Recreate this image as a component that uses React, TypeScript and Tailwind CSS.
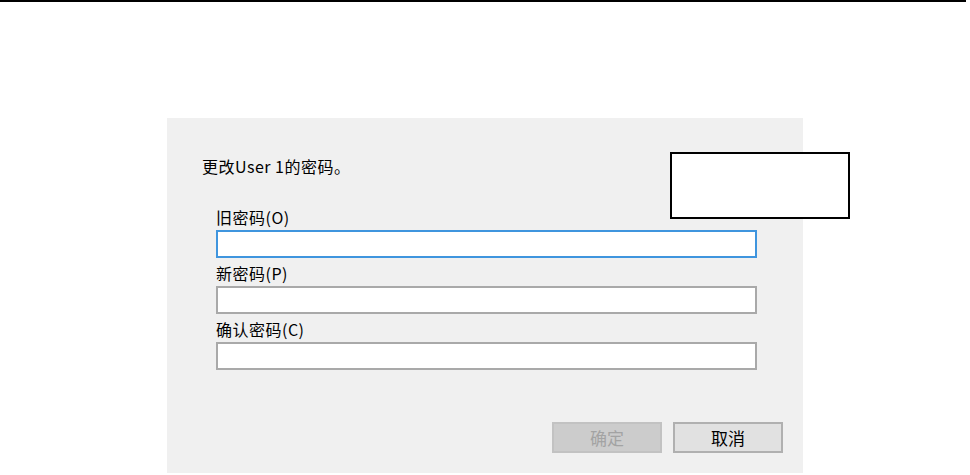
import React from 'react';

const fields = [
  { id: 'old', label: '旧密码(O)', focused: true },
  { id: 'new', label: '新密码(P)', focused: false },
  { id: 'confirm', label: '确认密码(C)', focused: false },
];

const App: React.FC = () => {
  return (
    <div className="relative w-[970px] h-[475px] bg-white overflow-hidden font-['Noto_Sans_CJK_SC',sans-serif] text-black">
      <div className="h-[2px] w-[966px] bg-black" />

      <div className="ml-[167px] mt-[116px] w-[636px] h-[355px] bg-[#f0f0f0] flex flex-col">
        <p className="ml-[35px] mt-[36px] text-[16px] leading-[24px] tracking-[0.5px]">更改User 1的密码。</p>

        <div className="ml-[49px] mr-[46px] mt-[26px] flex flex-col gap-[2px]">
          {fields.map((f) => (
            <div key={f.id} className="flex flex-col">
              <label className="h-[26px] flex items-center text-[16px] tracking-[0.5px]">{f.label}</label>
              <input
                type="password"
                className={`h-[28px] w-full bg-white border-2 outline-none ${
                  f.focused ? 'border-[#3f95de]' : 'border-[#a9a9a9]'
                }`}
              />
            </div>
          ))}
        </div>

        <div className="mt-auto mb-[20px] mr-[20px] flex justify-end gap-[11px]">
          <button
            disabled
            className="w-[110px] h-[31px] bg-[#cccccc] border-2 border-[#c2c2c2] text-[#a3a3a3] text-[17px] leading-none"
          >
            确定
          </button>
          <button className="w-[110px] h-[31px] bg-[#e1e1e1] border-2 border-[#b0b0b0] text-black text-[17px] leading-none">
            取消
          </button>
        </div>
      </div>

      {/* annotation box laid over the dialog */}
      <div className="absolute left-[670px] top-[152px] w-[180px] h-[67px] bg-white border-2 border-black" />
    </div>
  );
};

export default App;
